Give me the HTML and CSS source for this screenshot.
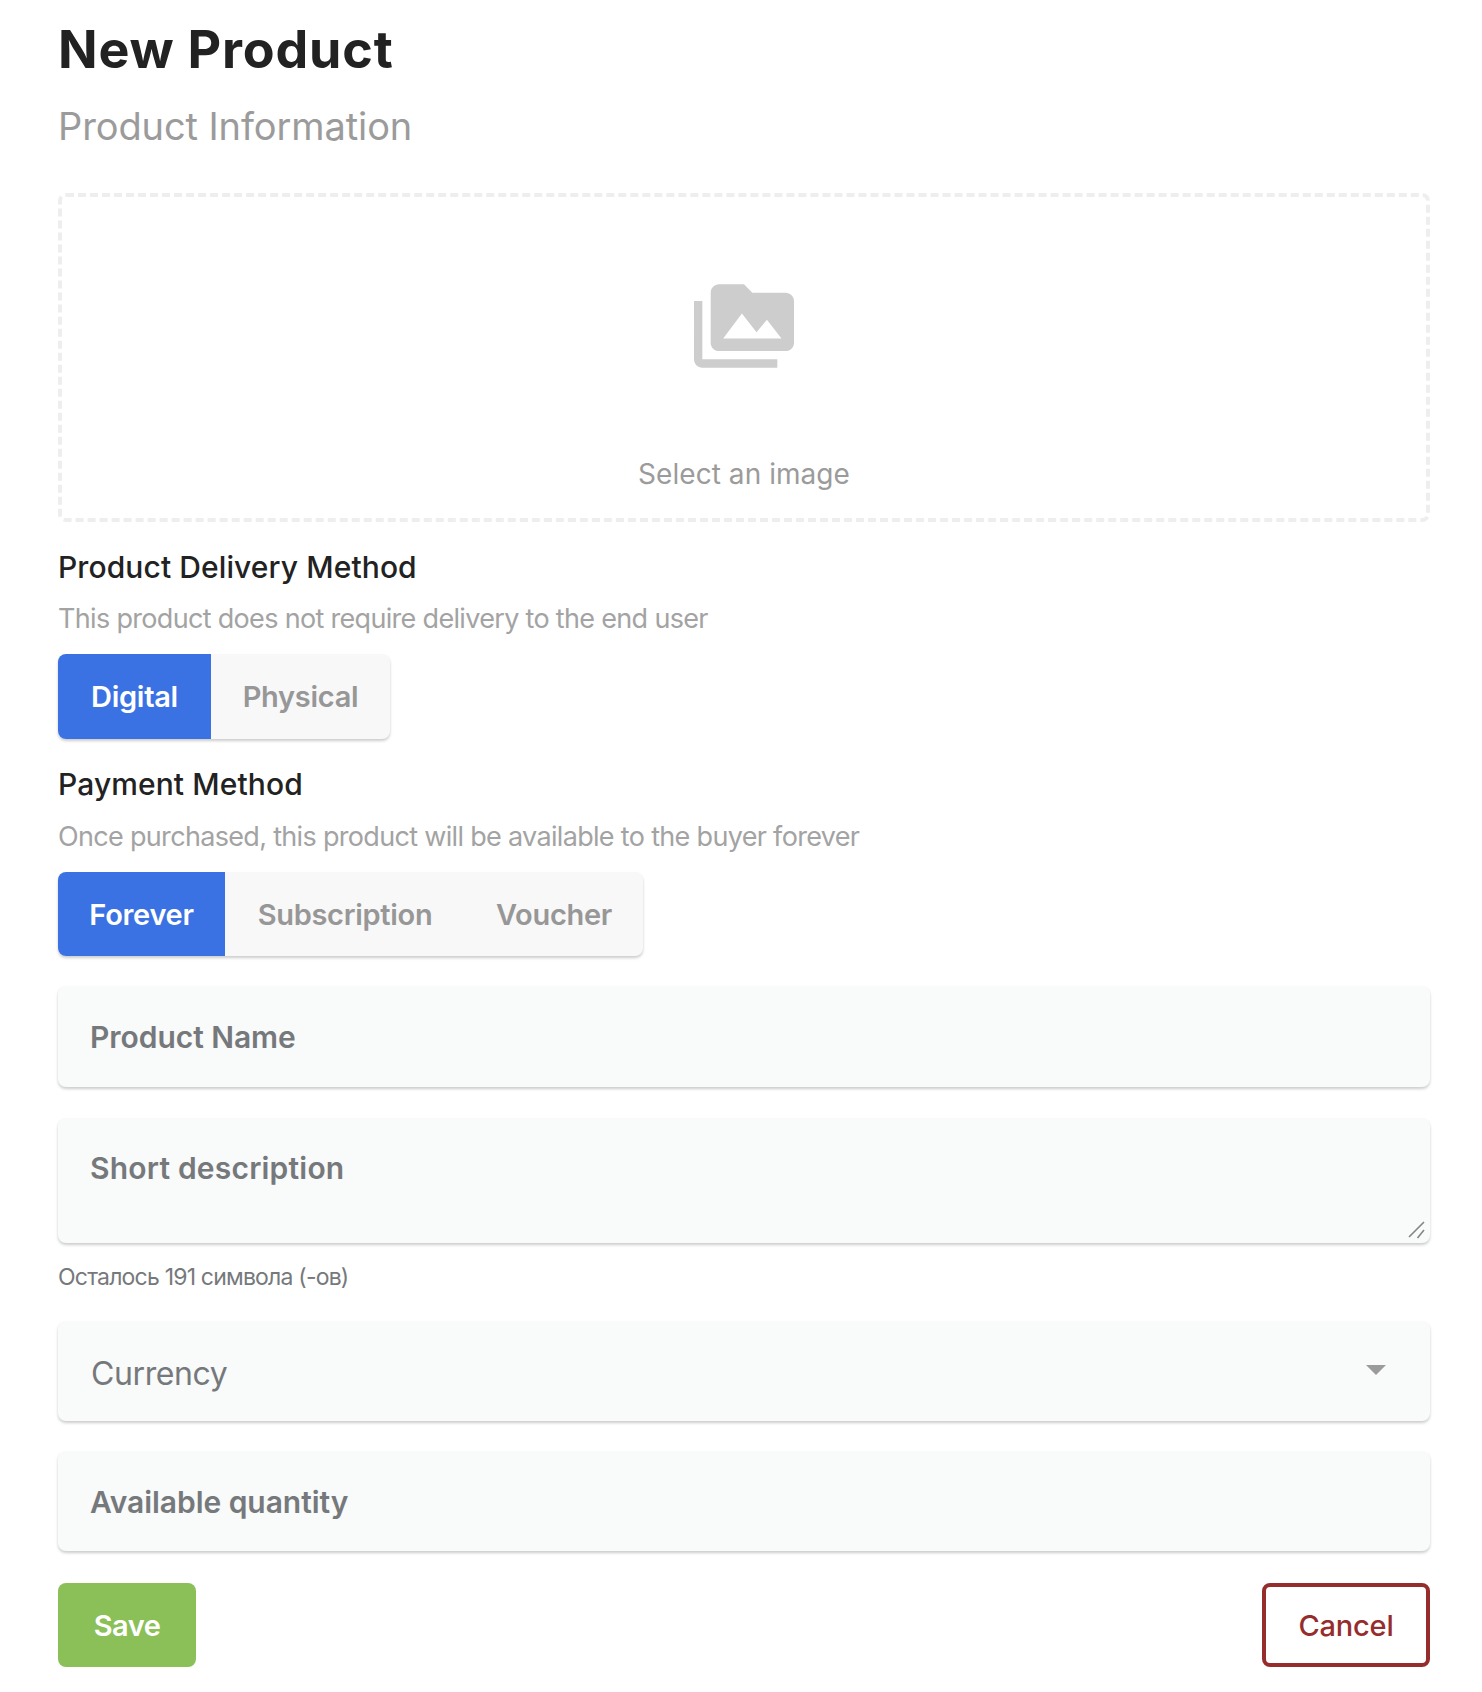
FILE: index.html
```html
<!DOCTYPE html>
<html lang="en">
<head>
<meta charset="utf-8">
<title>New Product</title>
<link rel="stylesheet" href="styles.css">
</head>
<body>
<main class="page">
  <h1 class="title">New Product</h1>
  <h2 class="subtitle">Product Information</h2>
  <div class="dropzone">
    <svg class="dropzone-icon" viewBox="0 0 24 24" aria-hidden="true"><path d="M2 6H0v5h.01L0 20c0 1.1.9 2 2 2h18v-2H2V6zm20-2h-8l-2-2H6c-1.1 0-1.99.9-1.99 2L4 16c0 1.1.9 2 2 2h16c1.1 0 2-.9 2-2V6c0-1.1-.9-2-2-2zM7 15l4.5-6 3.5 4.51 2.5-3.01L21 15H7z"/></svg>
    <span class="dropzone-text">Select an image</span>
  </div>
  <h3 class="label label-first">Product Delivery Method</h3>
  <p class="desc desc-first">This product does not require delivery to the end user</p>
  <div class="tabs tabs-a">
    <button class="tab tab-active tab-digital" type="button">Digital</button>
    <button class="tab tab-physical" type="button">Physical</button>
  </div>
  <h3 class="label">Payment Method</h3>
  <p class="desc desc-second">Once purchased, this product will be available to the buyer forever</p>
  <div class="tabs tabs-b">
    <button class="tab tab-active tab-forever" type="button">Forever</button>
    <button class="tab tab-subscription" type="button">Subscription</button>
    <button class="tab tab-voucher" type="button">Voucher</button>
  </div>
  <input class="field field-name" type="text" placeholder="Product Name">
  <div class="area-wrap">
    <textarea class="field field-area" placeholder="Short description"></textarea>
    <svg class="grip" viewBox="0 0 15 15" aria-hidden="true"><path d="M0 15 15 0M8.5 16l6.5-8"/></svg>
  </div>
  <p class="helper">Осталось 191 символа (-ов)</p>
  <div class="field field-select">
    <span class="select-text">Currency</span>
    <svg class="caret" viewBox="0 0 20 10" aria-hidden="true"><path d="M0 0h20L10 10z"/></svg>
  </div>
  <input class="field field-qty" type="text" placeholder="Available quantity">
  <div class="actions">
    <button class="btn btn-save" type="button">Save</button>
    <button class="btn btn-cancel" type="button">Cancel</button>
  </div>
</main>
</body>
</html>
```
FILE: styles.css
```css
* { box-sizing: border-box; }
html, body { margin: 0; background: #fff; }
body { font-family: Inter, "Noto Sans", sans-serif; height: 1692px; overflow: hidden; }
.page { display: flex; flex-direction: column; padding: 20px 52px 0 58px; }
.title { margin: 0; font-size: 52px; line-height: 60px; font-weight: 700; color: #222; letter-spacing: 0.8px; }
.subtitle { margin: 22px 0 0; font-size: 38px; line-height: 48px; font-weight: 400; color: #9b9b9b; letter-spacing: -0.1px; }
.dropzone { margin-top: 43px; height: 329px; border: 4px dashed #eee; border-radius: 8px; display: flex; flex-direction: column; align-items: center; padding-top: 79px; }
.dropzone-icon { width: 100px; height: 100px; fill: #cdcdcd; display: block; }
.dropzone-text { margin-top: 78px; font-size: 28px; line-height: 40px; color: #9b9b9b; letter-spacing: 0.05px; }
.label { margin: 25px 0 0; font-size: 30px; line-height: 40px; font-weight: 500; color: #222; letter-spacing: 0.1px; }
.desc { margin: 14px 0 0; font-size: 27px; line-height: 36px; color: #a3a3a3; letter-spacing: -0.68px; }
.desc-second { margin-top: 15px; }
.tabs { margin-top: 17px; align-self: flex-start; display: flex; height: 85px; background: #f8f8f8; border-radius: 8px; box-shadow: 0 2px 3px rgba(0,0,0,.2); overflow: hidden; }
.tabs-b { height: 84px; }
.tab { border: 0; background: none; padding: 0; font: 600 29px Inter, sans-serif; color: #979797; letter-spacing: -0.3px; }
.tab-active { background: #3a72e3; color: #fff; }
.tab-digital { width: 153px; }
.tab-physical { width: 179px; }
.tab-forever { width: 167px; }
.tab-subscription { width: 240px; }
.tab-voucher { width: 178px; }
.field { display: block; width: 100%; margin-top: 30px; border: 0; outline: 0; background: #f9fafa; border-radius: 8px; box-shadow: 0 2px 3px rgba(0,0,0,.2); padding: 0 32px; font: 600 30px Inter, sans-serif; letter-spacing: -0.05px; color: #76797c; }
.field::placeholder { color: #76797c; opacity: 1; }
.field-name { height: 101px; }
.area-wrap { position: relative; margin-top: 31px; height: 125px; }
.field-area { height: 125px; margin-top: 0; padding-top: 32px; padding-bottom: 0; line-height: 36px; resize: none; letter-spacing: 0.2px; }
.grip { position: absolute; right: 6px; bottom: 6px; width: 15px; height: 15px; overflow: visible; fill: none; stroke: #858585; stroke-width: 1.6; }
.helper { margin: 19px 0 0; font-size: 23px; line-height: 30px; color: #76797c; letter-spacing: -0.8px; }
.field-select { height: 100px; margin-top: 29px; padding: 0 44px 0 33px; display: flex; align-items: center; justify-content: space-between; font-size: 32px; font-weight: 400; letter-spacing: -0.4px; }
.select-text { margin-top: 4px; }
.caret { width: 20px; height: 10px; fill: #9b9b9b; margin-top: -3px; }
.field-qty { height: 100px; padding-top: 1px; }
.actions { margin-top: 32px; height: 84px; display: flex; justify-content: space-between; }
.btn { height: 84px; border-radius: 8px; font: 600 29px Inter, sans-serif; letter-spacing: -0.5px; }
.btn-save { width: 138px; border: 0; background: #8bc059; color: #fff; }
.btn-cancel { width: 168px; border: 4px solid #962d2d; background: #fff; color: #962d2d; font-weight: 500; letter-spacing: -0.2px; }
```
